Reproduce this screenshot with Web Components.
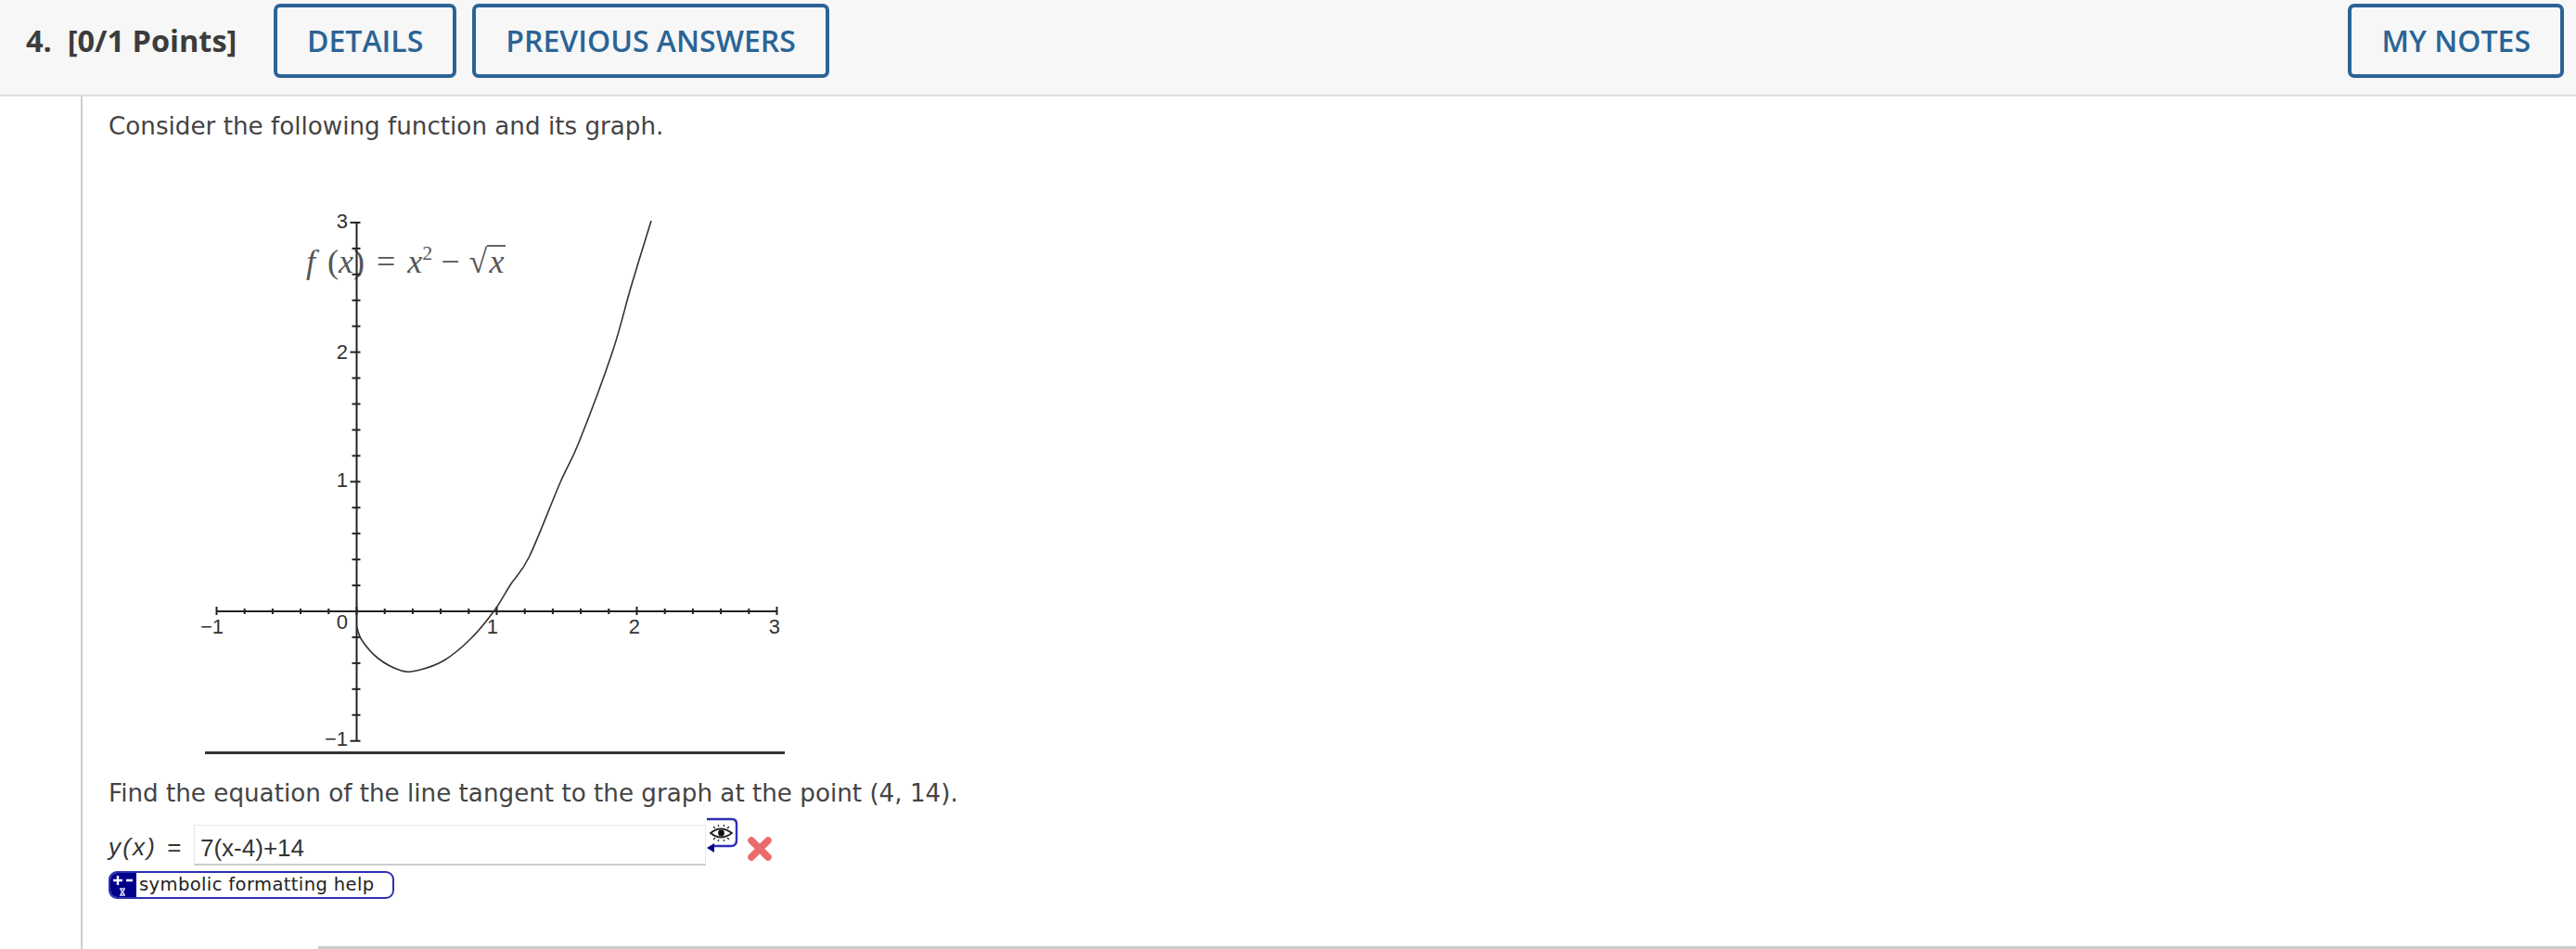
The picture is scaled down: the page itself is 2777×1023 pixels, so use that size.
<!DOCTYPE html>
<html lang="en">
<head>
<meta charset="utf-8">
<title>Question 4</title>
<style>
    html, body { margin: 0; padding: 0; background: #fff; }
    body { height: 1023px; overflow: hidden; }
</style>
</head>
<body>
<question-view>
    <question-header slot="header" label="4. [0/1 Points]">
        <action-button>DETAILS</action-button>
        <action-button>PREVIOUS ANSWERS</action-button>
        <action-button slot="end">MY NOTES</action-button>
    </question-header>
    <prompt-text style="height:36px;margin-top:14px">Consider the following function and its graph.</prompt-text>
    <math-formula></math-formula>
    <function-graph></function-graph>
    <prompt-text style="height:36px;margin-top:22px">Find the equation of the line tangent to the graph at the point (4, 14).</prompt-text>
    <answer-row label="y(x)" value="7(x-4)+14"></answer-row>
    <help-button>symbolic formatting help</help-button>
</question-view>

<script>
class QuestionView extends HTMLElement {
    constructor() {
        super();
        this.attachShadow({ mode: "open" });
    }

    connectedCallback() {
        this.shadowRoot.innerHTML = `
            <style>
                :host { display: block; height: 1023px; position: relative; }
                .body {
                    height: 919px;
                    margin-left: 87px;
                    padding-left: 28px;
                    border-left: 2px solid #ccc;
                    box-sizing: border-box;
                    display: flex;
                    flex-direction: column;
                    align-items: flex-start;
                }
                .rule { position: absolute; left: 343px; right: 0; bottom: 0; height: 3px; background: #ccc; }
            </style>
            <slot name="header"></slot>
            <div class="body"><slot></slot></div>
            <div class="rule"></div>
        `;
    }
}

class QuestionHeader extends HTMLElement {
    constructor() {
        super();
        this.attachShadow({ mode: "open" });
    }

    connectedCallback() {
        this.shadowRoot.innerHTML = `
            <style>
                :host {
                    display: flex;
                    box-sizing: border-box;
                    height: 104px;
                    padding: 4px 13px 18px 28px;
                    align-items: stretch;
                    gap: 17px;
                    background: #f7f7f7;
                    border-bottom: 2px solid #ddd;
                }
                .label {
                    width: 250px;
                    align-self: center;
                    margin-top: -2px;
                    font: 700 32.5px "Open Sans", sans-serif;
                    color: #3c3c3c;
                    white-space: pre;
                }
                .end { margin-left: auto; display: flex; }
            </style>
            <span class="label">${this.getAttribute("label").replace(". ", ".  ")}</span>
            <slot></slot>
            <div class="end"><slot name="end"></slot></div>
        `;
    }
}

class ActionButton extends HTMLElement {
    constructor() {
        super();
        this.attachShadow({ mode: "open" });
    }

    connectedCallback() {
        this.shadowRoot.innerHTML = `
            <style>
                :host {
                    display: flex;
                    align-items: center;
                    box-sizing: border-box;
                    padding: 0 32px 2px;
                    border: 4px solid #2a6496;
                    border-radius: 7px;
                    font: 600 32px "Open Sans", sans-serif;
                    color: #2a6496;
                    white-space: nowrap;
                }
            </style>
            <slot></slot>
        `;
    }
}

class PromptText extends HTMLElement {
    constructor() {
        super();
        this.attachShadow({ mode: "open" });
    }

    connectedCallback() {
        this.shadowRoot.innerHTML = `
            <style>
                :host {
                    display: flex;
                    align-items: center;
                    font: 26.2px "DejaVu Sans", sans-serif;
                    color: #444;
                    white-space: nowrap;
                }
            </style>
            <slot></slot>
        `;
    }
}

class MathFormula extends HTMLElement {
    constructor() {
        super();
        this.attachShadow({ mode: "open" });
    }

    connectedCallback() {
        this.shadowRoot.innerHTML = `
            <style>
                :host {
                    display: block;
                    height: 48px;
                    margin: 8px 0 0 105px;
                    font: 36px/48px "Liberation Serif", serif;
                    color: #555;
                    white-space: pre;
                }
                sup { font-size: 22px; line-height: 0; vertical-align: 14px; }
                .gap { display: inline-block; }
                .root { display: inline-block; border-top: 2px solid #666; line-height: 32px; padding: 0 2px; }
            </style>
            <i>f</i><span class="gap" style="width:13px"></span>(<i>x</i>)<span class="gap" style="width:13px"></span>=<span class="gap" style="width:13px"></span><i>x</i><sup>2</sup><span class="gap" style="width:9px"></span>−<span class="gap" style="width:10px"></span>√<span class="root"><i>x</i></span>
        `;
    }
}

class FunctionGraph extends HTMLElement {
    constructor() {
        super();
        this.attachShadow({ mode: "open" });
    }

    connectedCallback() {
        // svg origin is at page (210, 225), numbers below are page pixels
        const px = (x) => x - 210;
        const py = (y) => y - 225;
        const ox = 384.5, oy = 659, ux = 151, uy = 139.7;
        let ticks = "";
        for (let i = -5; i <= 15; i++) {
            const big = i % 5 === 0;
            const x = px(ox + (i / 5) * ux);
            ticks += `<line x1="${x}" x2="${x}" y1="${py(oy) - (big ? 5 : 3)}" y2="${py(oy) + (big ? 4 : 3)}"/>`;
        }
        for (let i = -5; i <= 15; i++) {
            const big = i % 5 === 0;
            const y = py(oy - (i / 5) * uy);
            ticks += `<line x1="${px(ox) - (big ? 7 : 5)}" x2="${px(ox) + 4}" y1="${y}" y2="${y}"/>`;
        }
        const pts = [
            [384.5, 675], [390, 690], [408, 710], [432, 722.7], [450, 722.7], [479, 711.7], [508, 688],
            [533, 658], [550.5, 630], [570.6, 600], [604, 520], [624, 477], [660, 380], [680, 310], [702, 238],
        ].map(([x, y]) => [px(x), py(y)]);
        // catmull-rom through the sampled points
        let curve = `M${pts[0][0]} ${pts[0][1]}`;
        for (let i = 0; i < pts.length - 1; i++) {
            const p0 = pts[i - 1] || pts[i], p1 = pts[i], p2 = pts[i + 1], p3 = pts[i + 2] || p2;
            const c1 = [p1[0] + (p2[0] - p0[0]) / 6, p1[1] + (p2[1] - p0[1]) / 6];
            const c2 = [p2[0] - (p3[0] - p1[0]) / 6, p2[1] - (p3[1] - p1[1]) / 6];
            curve += `C${c1[0]} ${c1[1]} ${c2[0]} ${c2[1]} ${p2[0]} ${p2[1]}`;
        }
        const labels = [
            ["3", 375, 246], ["2", 375, 387], ["1", 375, 525], ["−1", 375, 804],
            ["0", 375, 678], ["−1", 241, 683], ["1", 537, 683], ["2", 690, 683], ["3", 841, 683],
        ].map(([t, x, y]) => `<text x="${px(x)}" y="${py(y)}">${t}</text>`).join("");

        this.shadowRoot.innerHTML = `
            <style>
                :host { display: block; width: 650px; height: 590px; margin: 15px 0 0 93px; }
                svg { display: block; }
                .axes line { stroke: #222; stroke-width: 2; }
                text { font: 22px "Liberation Sans", sans-serif; fill: #333; text-anchor: end; }
            </style>
            <svg width="650" height="590" viewBox="0 0 650 590">
                <g class="axes">
                    <line x1="${px(ox - ux)}" x2="${px(ox + 3 * ux)}" y1="${py(oy)}" y2="${py(oy)}"/>
                    <line x1="${px(ox)}" x2="${px(ox)}" y1="${py(oy - 3 * uy)}" y2="${py(oy + uy)}"/>
                    ${ticks}
                </g>
                <path d="${curve}" fill="none" stroke="#333" stroke-width="1.6"/>
                ${labels}
                <rect x="${px(221)}" y="${py(810)}" width="625" height="3" fill="#333"/>
            </svg>
        `;
    }
}

class AnswerRow extends HTMLElement {
    constructor() {
        super();
        this.attachShadow({ mode: "open" });
    }

    connectedCallback() {
        this.shadowRoot.innerHTML = `
            <style>
                :host {
                    display: flex;
                    align-items: flex-start;
                    height: 44px;
                    margin-top: 16px;
                    font: 26px "Liberation Sans", sans-serif;
                    color: #333;
                    white-space: pre;
                }
                .label { line-height: 48px; width: 92px; }
                .label i { letter-spacing: 2.2px; margin-right: 11px; }
                .field {
                    box-sizing: border-box;
                    width: 552px;
                    height: 44px;
                    padding-left: 6px;
                    line-height: 48px;
                    background: #fff;
                    border: 1px solid #e8e8e8;
                    border-bottom: 2px solid #ccc;
                }
                .tools { position: relative; width: 80px; height: 44px; }
                svg { position: absolute; overflow: visible; }
            </style>
            <span class="label"><i>${this.getAttribute("label")}</i>=</span>
            <span class="field">${this.getAttribute("value")}</span>
            <div class="tools">
                <svg style="left:0;top:-8px" width="36" height="40" viewBox="0 0 36 40">
                    <path d="M1 2H28Q33 2 33 7V25Q33 31 27 31H8" fill="none" stroke="#2f2fb4" stroke-width="2.4"/>
                    <path d="M1 33L9 28V38Z" fill="#00008b"/>
                    <g fill="none" stroke="#222">
                        <path d="M5 17Q16 8 28 17Q16 26 5 17Z" stroke-width="1.8"/>
                        <path d="M8 10l2 2M13 8l1 2M20 8l-1 2M25 10l-2 2M8 24l2-2M13 26l1-2M20 26l-1-2M25 24l-2-2" stroke-width="1.2"/>
                    </g>
                    <circle cx="16.5" cy="17" r="3.4" fill="#111"/>
                </svg>
                <svg style="left:45px;top:13px" width="26" height="26" viewBox="0 0 26 26">
                    <path d="M4 4L22 22M22 4L4 22" fill="none" stroke="#e96b6b" stroke-width="7.5" stroke-linecap="round"/>
                </svg>
            </div>
        `;
    }
}

class HelpButton extends HTMLElement {
    constructor() {
        super();
        this.attachShadow({ mode: "open" });
    }

    connectedCallback() {
        this.shadowRoot.innerHTML = `
            <style>
                :host {
                    display: flex;
                    box-sizing: border-box;
                    width: 308px;
                    height: 30px;
                    margin-top: 6px;
                    border: 2px solid #2f2fb4;
                    border-radius: 9px;
                    overflow: hidden;
                    background: #fff;
                    font: 19.5px "DejaVu Sans", sans-serif;
                    letter-spacing: 0.4px;
                    color: #222;
                    white-space: nowrap;
                }
                svg { flex: none; background: #00008b; margin: -2px 0 -2px -2px; }
                .text { line-height: 25px; padding-left: 3px; }
            </style>
            <svg width="30" height="30" viewBox="0 0 30 30">
                <path d="M5 10H15M10 5V15M19 10H26" stroke="#fff" stroke-width="2.4" fill="none"/>
                <path d="M12 19H18M12 26H18M13 20L17 25M17 20L13 25" stroke="#dde" stroke-width="1.4" fill="none"/>
            </svg>
            <span class="text"><slot></slot></span>
        `;
    }
}

customElements.define("question-view", QuestionView);
customElements.define("question-header", QuestionHeader);
customElements.define("action-button", ActionButton);
customElements.define("prompt-text", PromptText);
customElements.define("math-formula", MathFormula);
customElements.define("function-graph", FunctionGraph);
customElements.define("answer-row", AnswerRow);
customElements.define("help-button", HelpButton);
</script>
</body>
</html>
